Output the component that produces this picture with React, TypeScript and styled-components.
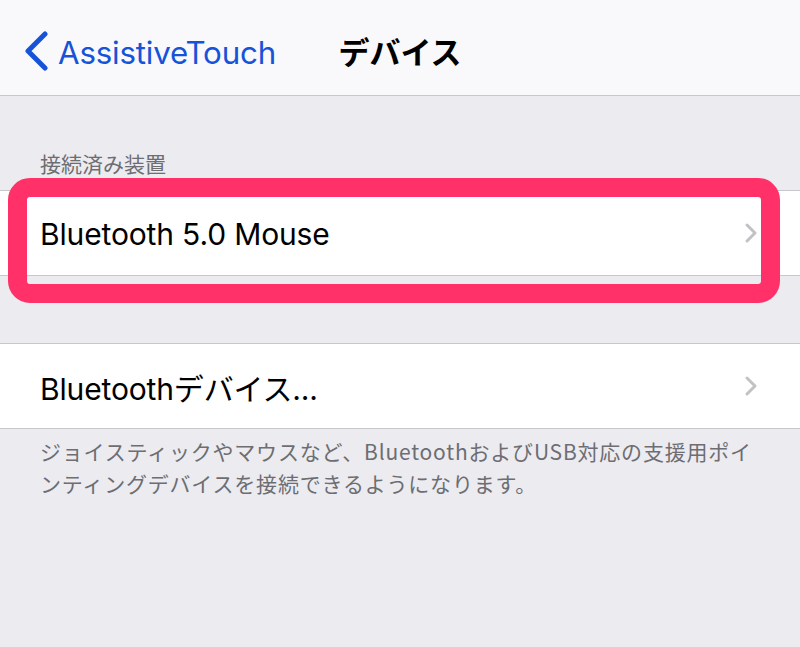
import React from "react";
import styled, { createGlobalStyle } from "styled-components";

const GlobalStyle = createGlobalStyle`
  html, body {
    margin: 0;
    padding: 0;
    background: #ebebf0;
  }
  body {
    font-family: Inter, "Noto Sans CJK JP", sans-serif;
    -webkit-font-smoothing: antialiased;
  }
`;

const Screen = styled.div`
  width: 800px;
  height: 647px;
  overflow: hidden;
  background: #ebebf0;
`;

const NavBar = styled.div`
  display: grid;
  grid-template-columns: 1fr auto 1fr;
  align-items: center;
  height: 95px;
  background: #f9f9fb;
  border-bottom: 1px solid #c8c7cc;
`;

const BackButton = styled.div`
  display: flex;
  align-items: center;
  gap: 8px;
  padding-left: 24px;
  padding-top: 6px;
  color: #1653d8;
  font-size: 31.3px;
  letter-spacing: -0.2px;

  span {
    padding-top: 4px;
  }
`;

const NavTitle = styled.div`
  font-family: "Noto Sans CJK JP", sans-serif;
  font-weight: 700;
  font-size: 31px;
  color: #000;
  padding-top: 6px;
`;

const SectionHeader = styled.div`
  padding: 52px 40px 11px;
  font-family: "Noto Sans CJK JP", sans-serif;
  font-size: 21px;
  color: #6d6d72;
  line-height: 31px;
`;

const Group = styled.div<{ $gapTop?: number }>`
  position: relative;
  margin-top: ${(p) => p.$gapTop ?? 0}px;
  background: #fff;
  border-top: 1px solid #c8c7cc;
  border-bottom: 1px solid #c8c7cc;
`;

const Row = styled.div`
  display: flex;
  align-items: center;
  justify-content: space-between;
  height: 84px;
  padding: 0 42px 0 40px;
`;

const RowLabel = styled.span`
  font-family: Inter, "Noto Sans CJK JP", sans-serif;
  font-size: 30px;
  color: #000;
  letter-spacing: -0.15px;
  padding-top: 2px;
`;

const Highlight = styled.div`
  position: absolute;
  left: 8px;
  right: 20px;
  top: -13px;
  bottom: -28px;
  border: 19px solid #ff3168;
  border-radius: 22px;
  pointer-events: none;
`;

const Footer = styled.div`
  padding: 6px 40px 0;
  font-family: "Noto Sans CJK JP", sans-serif;
  font-size: 21px;
  line-height: 32px;
  letter-spacing: 0.8px;
  color: #6d6d72;
`;

const BackChevron = () => (
  <svg width="26" height="40" viewBox="0 0 26 40">
    <polyline
      points="21,3 4,20 21,37"
      fill="none"
      stroke="#1653d8"
      strokeWidth="5"
      strokeLinecap="round"
      strokeLinejoin="round"
    />
  </svg>
);

const Disclosure = () => (
  <svg width="14" height="22" viewBox="0 0 14 22">
    <polyline
      points="3,3 11,11 3,19"
      fill="none"
      stroke="#c1c1c6"
      strokeWidth="3"
      strokeLinecap="round"
      strokeLinejoin="round"
    />
  </svg>
);

export default function App() {
  return (
    <Screen>
      <GlobalStyle />
      <NavBar>
        <BackButton>
          <BackChevron />
          <span>AssistiveTouch</span>
        </BackButton>
        <NavTitle>デバイス</NavTitle>
        <div />
      </NavBar>

      <SectionHeader>接続済み装置</SectionHeader>
      <Group>
        <Row>
          <RowLabel>Bluetooth 5.0 Mouse</RowLabel>
          <Disclosure />
        </Row>
        <Highlight />
      </Group>

      <Group $gapTop={67}>
        <Row>
          <RowLabel>Bluetoothデバイス...</RowLabel>
          <Disclosure />
        </Row>
      </Group>

      <Footer>
        ジョイスティックやマウスなど、BluetoothおよびUSB対応の支援用ポインティングデバイスを接続できるようになります。
      </Footer>
    </Screen>
  );
}
